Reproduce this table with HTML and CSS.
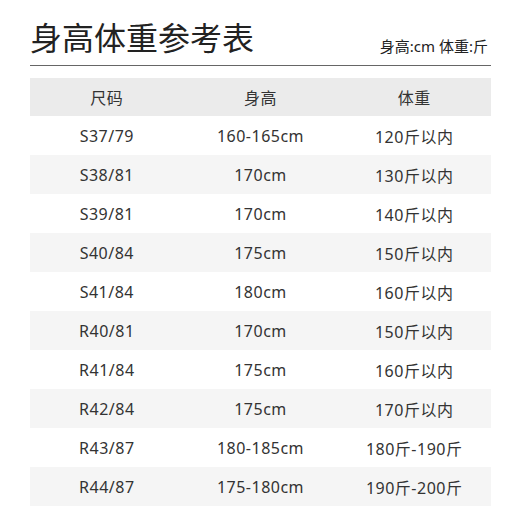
FILE: index.html
```html
<!DOCTYPE html>
<html lang="zh">
<head>
<meta charset="utf-8">
<link rel="stylesheet" href="styles.css">
</head>
<body>
<div class="page">
  <div class="head">
    <h1 class="title">身高体重参考表</h1>
    <div class="unit">身高:cm 体重:斤</div>
  </div>
  <div class="rule"></div>
  <div class="table">
    <div class="row hdr"><div>尺码</div><div>身高</div><div>体重</div></div>
    <div class="row"><div>S37/79</div><div>160-165cm</div><div>120斤以内</div></div>
    <div class="row alt"><div>S38/81</div><div>170cm</div><div>130斤以内</div></div>
    <div class="row"><div>S39/81</div><div>170cm</div><div>140斤以内</div></div>
    <div class="row alt"><div>S40/84</div><div>175cm</div><div>150斤以内</div></div>
    <div class="row"><div>S41/84</div><div>180cm</div><div>160斤以内</div></div>
    <div class="row alt"><div>R40/81</div><div>170cm</div><div>150斤以内</div></div>
    <div class="row"><div>R41/84</div><div>175cm</div><div>160斤以内</div></div>
    <div class="row alt"><div>R42/84</div><div>175cm</div><div>170斤以内</div></div>
    <div class="row"><div>R43/87</div><div>180-185cm</div><div>180斤-190斤</div></div>
    <div class="row alt"><div>R44/87</div><div>175-180cm</div><div>190斤-200斤</div></div>
  </div>
</div>
</body>
</html>
```
FILE: styles.css
```css
html, body {
  margin: 0;
  padding: 0;
  background: #ffffff;
}
body {
  font-family: "Noto Sans", "Noto Sans CJK SC", sans-serif;
  color: #333333;
}
.page {
  width: 461px;
  padding: 14px 29px 0 30px;
}
.head {
  display: flex;
  justify-content: space-between;
  align-items: flex-end;
  height: 44px;
}
.title {
  margin: 0;
  font-family: "Noto Sans CJK SC", sans-serif;
  font-size: 32px;
  font-weight: 400;
  line-height: 44px;
  color: #222222;
}
.unit {
  font-size: 15px;
  line-height: 20px;
  color: #222222;
  padding-bottom: 2px;
  padding-right: 3px;
}
.rule {
  margin-top: 7px;
  height: 1px;
  background: #666666;
}
.table {
  margin-top: 12px;
}
.row {
  display: grid;
  grid-template-columns: 1fr 1fr 1fr;
  height: 39px;
  align-items: center;
  font-size: 16px;
  letter-spacing: 0.5px;
  text-align: center;
}
.row.hdr {
  height: 38px;
  background: #ebebeb;
}
.row.alt {
  background: #f5f5f5;
}
```
